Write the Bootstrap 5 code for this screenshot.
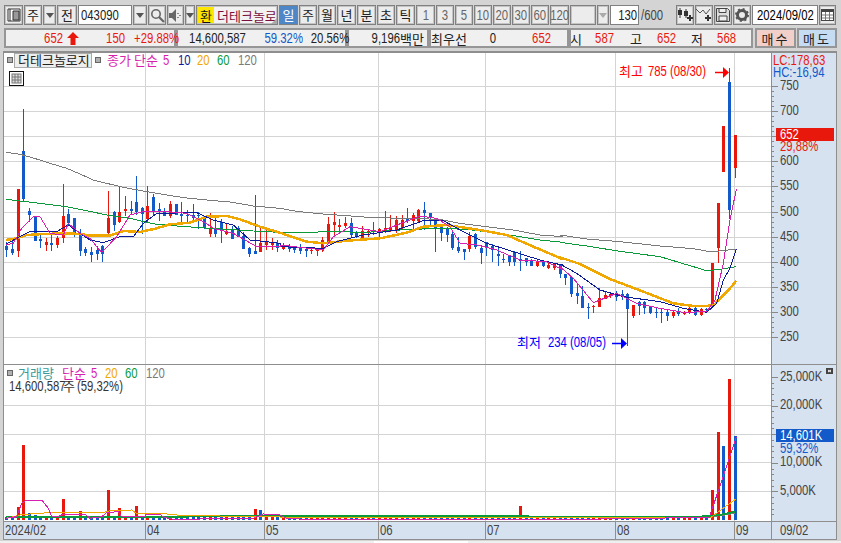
<!DOCTYPE html>
<html lang="ko">
<head>
    <meta charset="UTF-8">
    <meta name="viewport" content="width=device-width, initial-scale=1.0">
    <title>더테크놀로지 차트</title>
    <link href="https://cdn.jsdelivr.net/npm/bootstrap@5.3.2/dist/css/bootstrap.min.css" rel="stylesheet">
    <style>
        html, body { height: 543px; overflow: hidden; }
        body { margin: 0; background: #d4d4d4; color: #222; font: 14px "Liberation Sans", "Noto Sans CJK KR", sans-serif; line-height: 1; }
        svg { display: block; overflow: visible; }
        svg text { font-family: "Liberation Sans", sans-serif; font-size: 14px; }
        .ko, svg text.ko { font-family: "Noto Sans CJK KR", sans-serif; font-size: 13px; }
        /* 좁은 숫자: 원본 비트맵 글꼴 폭에 맞춤 */
        .nar { display: inline-block; transform: scaleX(.81); }
        .nar-l { display: inline-block; transform: scaleX(.81); transform-origin: left center; }
        /* 상단 툴바: 칸 폭은 grid 트랙으로 */
        .toolbar { margin: 5px 0 0 4px; width: 833px; height: 20px; column-gap: 1px;
            grid-template-columns: 19px 18px 13px 20px 54px 14px 18px 17px 10px 82px 19px 18px 18px 19px 19px 18px 19px 19px 18px 18px 18px 18px 18px 18px 19px 26px 12px 29px 35px 18px 18px 18px 18px 66px 17px; }
        .tb-btn { --bs-btn-padding-x: 0; --bs-btn-padding-y: 0; --bs-btn-border-radius: 0; --bs-btn-border-width: 0; height: 20px; background: #ececec; outline: 1px solid #808080; outline-offset: -1px; box-shadow: inset 0 0 0 2px #c4c4c4; color: #222; display: flex; align-items: center; justify-content: center; white-space: nowrap; }
        .tb-btn.ko { font-size: 13px; }
        .tb-flat { background: #f2f2f2; }
        .tb-on { background: #4f86c6; color: #fff; box-shadow: none; }
        .tb-num { color: #666; font-size: 14px; }
        .tb-white { background: #fff; justify-content: flex-start; padding-left: 3px; font-size: 14px; box-shadow: none; }
        .tb-date { padding-left: 5px; color: #000; }
        .tb-right { justify-content: flex-end; padding-right: 0; }
        .tb-name { background: #f2f2f2; justify-content: flex-start; color: #7a0f3c; position: relative; }
        .tb-name .hwan { background: #ffe600; color: #111; width: 16px; height: 16px; margin: 0 3px 0 2px; display: flex; align-items: center; justify-content: center; }
        .tb-name .corner { position: absolute; right: 1px; bottom: 1px; border-left: 6px solid transparent; border-bottom: 6px solid #aaa; }
        .tb-plain { color: #444; display: flex; align-items: center; padding-left: 1px; font-size: 14px; }
        .caret { border-left: 4px solid transparent; border-right: 4px solid transparent; border-top: 5px solid #555; }
        .caret-off { border-top-color: #aaa; }
        /* 시세 바 */
        .quote-bar { margin: 3px 0 0 4px; width: 833px; height: 20px; }
        .q-cell { height: 20px; background: #f0f0f0; outline: 2px solid #969696; outline-offset: -2px; display: grid; align-items: center; }
        .q-1 { width: 172px; grid-template-columns: 59px 15px 47px 48px; }
        .q-2 { width: 171px; grid-template-columns: 69px 58px 41px; }
        .q-3 { width: 82px; grid-template-columns: 53px 27px; }
        .q-4 { width: 140px; grid-template-columns: 2px 38px 27px 55px; }
        .q-5 { width: 184px; grid-template-columns: 1px 12px 32px 28px 34px 27px 33px; }
        .q-buy, .q-sell { height: 20px; width: 41px; outline: 2px solid #969696; outline-offset: -2px; display: flex; align-items: center; justify-content: center; letter-spacing: 2px; }
        .q-buy { background: #f2cfc8; margin-left: 2px; }
        .q-sell { background: #c6dcf2; margin-left: 1px; width: 40px; }
        .up { color: #e8190c; }
        .dn { color: #1259c9; }
        .cell-r { text-align: right; transform: scaleX(.81); transform-origin: right center; }
        .cell-r.ko { transform: none; }
        /* 차트 */
        .chart-frame { margin: 3px 0 0 3px; width: 834px; border-top: 2px solid #8e8e8e; border-left: 1px solid #8e8e8e; }
        .pane { background: #fff; position: relative; width: 767px; }
        .pane-top { height: 312px; border-bottom: 1px solid #8e8e8e; }
        .pane-bottom { height: 157px; border-bottom: 1px solid #8e8e8e; }
        .axis-col { width: 66px; background: #d6e2ef; }
        .date-axis { background: #d6e2ef; height: 18px; border-bottom: 1px solid #8e8e8e; }
        /* 맨 아래 잘린 입력 줄 */
        .bottom-strip { height: 3px; margin-top: 1px; background: #efefef; }
        .strip-gap { width: 374px; }
        .strip-field { width: 94px; background: #fff; }
    </style>
</head>
<body>
    <!-- 상단 툴바 -->
    <div class="d-grid toolbar">
        <button class="btn tb-btn"><svg width="14" height="14" viewBox="0 0 14 14"><path d="M1 1h12v12H1z" fill="#fff" stroke="#333"/><path d="M3 1v12M6 3h6v9H6z" fill="#999" stroke="#333"/></svg></button>
        <button class="btn tb-btn tb-flat ko">주</button>
        <button class="btn tb-btn"><span class="caret"></span></button>
        <button class="btn tb-btn ko">전</button>
        <div class="tb-btn tb-white"><span class="nar-l">043090</span></div>
        <button class="btn tb-btn"><span class="caret"></span></button>
        <button class="btn tb-btn"><svg width="15" height="15" viewBox="0 0 15 15"><circle cx="6" cy="6" r="4.2" fill="none" stroke="#666" stroke-width="1.6"/><path d="M9 9l5 5" stroke="#666" stroke-width="2.2"/></svg></button>
        <button class="btn tb-btn"><svg width="14" height="13" viewBox="0 0 14 13"><path d="M0 4h3l4-4v13l-4-4H0z" fill="#666"/><path d="M9 4v1M9 8v1M11 6v1" stroke="#666" stroke-width="1.5"/></svg></button>
        <button class="btn tb-btn"><span class="caret"></span></button>
        <div class="tb-btn tb-name ko"><span class="hwan">환</span>더테크놀로<span class="corner"></span></div>
        <button class="btn tb-btn tb-on ko">일</button>
        <button class="btn tb-btn ko">주</button>
        <button class="btn tb-btn ko">월</button>
        <button class="btn tb-btn ko">년</button>
        <button class="btn tb-btn ko">분</button>
        <button class="btn tb-btn ko">초</button>
        <button class="btn tb-btn ko">틱</button>
        <button class="btn tb-btn tb-num"><span class="nar">1</span></button>
        <button class="btn tb-btn tb-num"><span class="nar">3</span></button>
        <button class="btn tb-btn tb-num"><span class="nar">5</span></button>
        <button class="btn tb-btn tb-num"><span class="nar">10</span></button>
        <button class="btn tb-btn tb-num"><span class="nar">20</span></button>
        <button class="btn tb-btn tb-num"><span class="nar">30</span></button>
        <button class="btn tb-btn tb-num"><span class="nar">60</span></button>
        <button class="btn tb-btn tb-num"><span class="nar">120</span></button>
        <div class="tb-btn"></div>
        <button class="btn tb-btn"><span class="caret caret-off"></span></button>
        <div class="tb-btn tb-white tb-right"><span class="nar">130</span></div>
        <div class="tb-plain"><span class="nar-l">/600</span></div>
        <button class="btn tb-btn"><svg width="16" height="14" viewBox="0 0 16 14"><path d="M3 0v10M9 1v9" stroke="#333"/><rect x="1" y="2" width="4" height="5" fill="#333"/><rect x="7" y="3" width="4" height="5" fill="#333"/><path d="M13 7v6M10 10h6" stroke="#333" stroke-width="2"/></svg></button>
        <button class="btn tb-btn"><svg width="16" height="14" viewBox="0 0 16 14"><path d="M0 1l4 4 3-3 3 4 4-5" fill="none" stroke="#555"/><path d="M12 7v6M9 10h6" stroke="#333" stroke-width="2"/></svg></button>
        <button class="btn tb-btn"><svg width="14" height="14" viewBox="0 0 14 14"><path d="M.5.5h11l2 2v11H.5z" fill="#ddd" stroke="#444"/><path d="M3 .5h7v4H3zM3 8h8v5H3z" fill="#eee" stroke="#444"/></svg></button>
        <button class="btn tb-btn"><svg width="14" height="14" viewBox="0 0 14 14"><circle cx="7" cy="7" r="4.5" fill="none" stroke="#555" stroke-width="3"/><circle cx="7" cy="7" r="6" fill="none" stroke="#555" stroke-width="2" stroke-dasharray="2 2.7"/></svg></button>
        <div class="tb-btn tb-white tb-date"><span class="nar-l">2024/09/02</span></div>
        <button class="btn tb-btn"><svg width="13" height="12" viewBox="0 0 13 12"><rect x=".5" y=".5" width="12" height="11" fill="#fff" stroke="#444"/><path d="M.5 1h12v2H.5z" fill="#444"/><path d="M4.5 3v8M8.5 3v8M1 6h11M1 9h11" stroke="#777"/></svg></button>
    </div>

    <!-- 시세 -->
    <div class="d-flex quote-bar">
        <div class="q-cell q-1">
            <span class="cell-r up">652</span>
            <svg class="ms-1" width="12" height="13" viewBox="0 0 12 13"><path d="M6 0l6 6H8.5v7h-5V6H0z" fill="#e8190c"/></svg>
            <span class="cell-r up">150</span>
            <span class="cell-r up">+29.88%</span>
        </div>
        <div class="q-cell q-2">
            <span class="cell-r">14,600,587</span>
            <span class="cell-r dn">59.32%</span>
            <span class="cell-r">20.56%</span>
        </div>
        <div class="q-cell q-3">
            <span class="cell-r">9,196</span>
            <span class="ko">백만</span>
        </div>
        <div class="q-cell q-4">
            <span></span>
            <span class="ko">최우선</span>
            <span class="cell-r">0</span>
            <span class="cell-r up">652</span>
        </div>
        <div class="q-cell q-5">
            <span></span>
            <span class="ko">시</span>
            <span class="cell-r up">587</span>
            <span class="cell-r ko">고</span>
            <span class="cell-r up">652</span>
            <span class="cell-r ko">저</span>
            <span class="cell-r up">568</span>
        </div>
        <div class="q-buy ko">매수</div>
        <div class="q-sell ko">매도</div>
    </div>

    <!-- 차트 -->
    <div class="chart-frame">
        <div class="d-flex pane-top">
            <div class="pane"><svg id="price-plot" width="767" height="311" viewBox="4 53 767 311"></svg></div>
            <div class="axis-col"><svg id="price-axis" width="66" height="311" viewBox="771 53 66 311"></svg></div>
        </div>
        <div class="d-flex pane-bottom">
            <div class="pane"><svg id="vol-plot" width="767" height="156" viewBox="4 365 767 156"></svg></div>
            <div class="axis-col"><svg id="vol-axis" width="66" height="156" viewBox="771 365 66 156"></svg></div>
        </div>
        <div class="date-axis"><svg id="date-axis" width="833" height="17" viewBox="4 522 833 17"></svg></div>
    </div>
    <div class="d-flex bottom-strip">
        <div class="strip-gap"></div>
        <div class="strip-field"></div>
    </div>

    <script>
    // 색상
    const RED = '#e8190c', BLUE = '#1259c9', GRID = '#d4d4d4', AXIS_TXT = '#444', EDGE = '#8e8e8e';
    const MAG = '#d81fb0', NAVY = '#0a1a9a', ORG = '#f0a800', GRN = '#0a9a3a', GRY = '#7a7a7a', TEAL = '#3a9a9a';
    const GRID_X = [145, 264, 378, 485, 615, 734];

    // 봉 좌표: 3배 확대 화면에서 읽은 값 [고, 몸통위, 몸통아래, 저, 양봉]
    const groupA = [[425,438,450,470,0],[420,447,458,465,0],[267,267,453,470,1],[27,153,297,305,0],[325,333,345,365,0],[348,348,422,422,0],[405,417,423,445,0],[415,426,435,452,1],[405,429,435,452,0],[408,414,435,443,1],[252,348,414,428,1],[327,342,369,378,0],[354,354,402,410,0],[388,402,453,467,0],[441,447,459,467,0],[441,456,465,485,0],[438,450,462,480,0],[435,438,462,485,0],[273,354,399,405,1],[334,336,375,393,0],[258,336,366,369,1],[288,327,333,348,1],[303,327,333,345,0],[228,306,336,345,0],[321,324,342,402,0],[258,318,357,366,1],[282,291,333,345,0],[309,327,333,363,0],[324,336,348,348,0],[303,312,348,354,1],[312,312,345,345,0],[306,342,348,372,0],[330,345,348,372,0],[312,345,354,360,0],[336,345,347,387,0],[351,354,384,387,0],[339,387,402,411,1],[348,387,402,411,0],[357,366,393,429,0],[369,393,402,405,1],[378,390,417,417,0],[378,384,411,411,0],[396,408,447,447,0],[441,444,462,471,0],[285,453,462,462,0],[378,429,456,456,1],[390,426,435,450,1],[414,426,435,450,1],[420,429,444,456,0]];
    const groupB = [[190,195,207,210,1],[192,198,208,215,0],[197,199,209,218,0],[192,205,212,222,0],[205,208,212,230,0],[208,210,212,222,1],[208,210,212,228,1],[170,180,208,215,1],[110,132,185,190,1],[96,126,135,165,1],[118,136,141,155,1],[110,129,138,145,1],[114,129,165,170,0],[153,155,168,175,0],[138,152,180,180,1],[147,152,160,170,1],[126,153,157,165,0],[145,148,156,178,1],[93,144,156,158,1],[105,141,153,156,1],[108,120,153,160,1],[105,120,144,146,1],[84,118,122,130,0],[100,105,123,150,1],[87,90,122,125,1],[66,90,99,150,0],[99,99,114,135,0],[117,120,144,216,0],[132,141,159,183,0],[141,147,165,186,0],[150,162,204,210,0],[171,201,213,219,0],[207,207,216,240,0],[156,168,207,216,1],[159,162,201,207,0],[195,204,219,252,0],[186,186,201,228,0],[192,198,210,246,0],[204,222,228,258,0],[222,237,240,249,0],[228,228,246,258,0],[213,216,246,258,0],[213,237,243,273,0],[234,234,246,258,0],[237,240,258,258,0],[240,246,258,261,1],[240,246,258,261,0],[249,255,264,267,1],[249,252,264,270,1],[252,252,282,294,0],[282,282,294,315,0]];
    const groupC = [[648,650,702,712,0],[672,700,708,733,0],[678,708,744,745,0],[730,742,745,776,0],[735,738,742,758,1],[685,714,740,740,1],[692,706,716,718,1],[695,703,708,715,1],[693,706,710,722,0],[690,702,710,720,0],[700,703,746,857,0],[735,735,768,773,1],[722,725,738,765,0],[722,725,745,762,0],[740,740,758,762,0],[745,755,758,775,0],[745,755,760,788,0],[748,755,768,782,0],[750,756,768,774,1],[745,755,762,768,0],[752,755,763,765,1],[740,743,758,762,1],[735,745,765,768,0],[743,748,765,768,1],[745,746,750,752,0],[608,610,735,740,1],[430,430,563,610,1],[198,198,335,335,1],[25,66,450,478,0],[225,225,325,353,1]];
    const toPx = (rows, oy) => rows.map(r => ({ hi: oy + r[0] / 3, top: oy + r[1] / 3, bot: oy + r[2] / 3, lo: oy + r[3] / 3, up: !!r[4] }));
    const candles = [...toPx(groupA, 100), ...toPx(groupB, 180), ...toPx(groupC, 60)];
    const xOf = i => Math.round(6.3 + i * 5.646);

    // 이동평균선: 확대 화면 좌표를 세 구간으로 나눠서
    const seg = (pts, ox, oy) => pts.map(p => [ox + p[0] / 3, oy + p[1] / 3]);
    const line = (a, b, c) => [...seg(a, 0, 100), ...seg(b, 280, 180), ...seg(c, 560, 60)];
    const priceLines = [
        { color: GRY, w: 1, pts: line([[18,157],[60,163],[100,174],[150,190],[200,205],[240,222],[280,240],[320,250],[370,262],[440,275],[500,285],[560,294],[620,300],[690,306],[760,318],[840,325]], [[50,94],[130,102],[280,113],[380,115],[480,118],[540,130],[620,140],[700,150],[780,165],[850,170]], [[0,525],[80,537],[180,545],[300,558],[400,566],[450,575],[490,572],[529,567]]) },
        { color: GRN, w: 1, pts: line([[18,298],[60,303],[120,310],[200,320],[260,332],[320,345],[390,355],[430,365],[470,373],[530,378],[600,383],[680,388],[760,393],[840,397]], [[70,157],[160,155],[260,157],[360,150],[470,145],[560,148],[640,158],[720,170],[780,180],[850,187]], [[0,547],[80,558],[180,574],[300,590],[400,620],[440,632],[480,628],[529,620]]) },
        { color: ORG, w: 2.5, pts: line([[18,420],[50,415],[80,405],[130,402],[200,400],[240,402],[270,407],[330,407],[370,393],[420,396],[470,385],[510,373],[570,368],[620,350],[680,348],[720,358],[780,380],[840,398]], [[80,185],[130,190],[200,182],[300,175],[380,158],[430,140],[500,135],[600,150],[680,165],[760,200],[850,238]], [[0,592],[60,612],[150,657],[250,695],[340,730],[400,738],[460,737],[480,715],[510,685],[529,662]]) },
        { color: NAVY, w: 1, pts: line([[18,432],[60,410],[90,395],[170,395],[205,375],[240,400],[270,420],[310,428],[360,410],[400,410],[430,370],[470,340],[590,338],[640,360],[700,375],[750,420],[800,425],[840,430]], [[0,200],[130,205],[170,185],[250,165],[350,150],[430,122],[490,122],[550,155],[620,190],[700,215],[780,240],[850,256]], [[0,612],[50,640],[120,690],[190,710],[300,725],[370,745],[440,757],[470,730],[490,660],[510,625],[529,568]]) },
        { color: MAG, w: 1, pts: line([[18,435],[40,430],[65,385],[100,350],[120,350],[150,400],[190,405],[205,370],[240,400],[270,415],[305,458],[350,410],[390,345],[430,335],[500,335],[560,340],[610,365],[640,385],[700,400],[770,440],[840,440]], [[0,195],[130,210],[160,170],[210,140],[300,155],[420,108],[470,115],[510,140],[540,190],[590,195],[650,210],[720,240],[800,245],[850,270]], [[0,620],[40,655],[100,728],[170,700],[230,730],[300,745],[370,757],[440,755],[465,720],[490,610],[510,480],[529,388]]) }
    ];
    const poly = (pts, color, w) => `<polyline points="${pts.map(p => p.join(',')).join(' ')}" fill="none" stroke="${color}" stroke-width="${w}" shape-rendering="crispEdges"/>`;
    const hLine = (x1, x2, y, c) => `<path d="M${x1} ${y + .5}H${x2}" stroke="${c}"/>`;
    const vLine = (x, y1, y2, c) => `<path d="M${x + .5} ${y1}V${y2}" stroke="${c}"/>`;
    // 숫자는 좁게, 한글은 그대로
    const num = (x, y, s, c) => `<text transform="translate(${x} ${y}) scale(.81 1)" fill="${c}">${s}</text>`;
    const han = (x, y, s, c) => `<text class="ko" x="${x}" y="${y}" fill="${c}">${s}</text>`;
    const square = (x, y) => `<rect x="${x + .5}" y="${y + .5}" width="5" height="5" fill="#b0b0b0" stroke="#666"/>`;

    // 가격 차트
    const priceY = p => Math.round(86 + (750 - p) * 0.502);
    let price = '';
    for (let p = 250; p <= 750; p += 50) price += hLine(4, 771, priceY(p), GRID);
    GRID_X.forEach(x => price += vLine(x, 53, 364, GRID));
    candles.forEach((c, i) => {
        const color = c.up ? RED : BLUE, x = xOf(i);
        price += `<rect x="${x}" y="${c.hi}" width="1" height="${c.lo - c.hi}" fill="${color}" shape-rendering="crispEdges"/>`;
        price += `<rect x="${x - 1}" y="${c.top}" width="3" height="${Math.max(c.bot - c.top, 1)}" fill="${color}" shape-rendering="crispEdges"/>`;
    });
    priceLines.forEach(l => price += poly(l.pts, l.color, l.w));
    // 범례
    price += square(7, 57) + `<rect x="14.5" y="53.5" width="77" height="14" fill="#eee" stroke="#aaa"/>` + han(18, 65, '더테크놀로지', '#222') + square(95, 57);
    price += han(107, 65, '종가', MAG) + han(134, 65, '단순', MAG) + num(163, 65, '5', MAG) + num(178, 65, '10', NAVY) + num(197, 65, '20', ORG) + num(217, 65, '60', GRN) + num(238, 65, '120', GRY);
    price += `<rect x="9.5" y="71.5" width="14" height="14" fill="#fff" stroke="#111"/><rect x="12" y="74" width="9" height="9" fill="#ddd" stroke="#777"/><path d="M15 74v9M18 74v9M12 77h9M12 80h9" stroke="#777"/>`;
    // 최고, 최저
    price += han(619, 76, '최고', '#f00') + num(648, 76, '785 (08/30)', '#f00');
    price += `<path d="M715 72.5h9" stroke="#f00" stroke-width="1.5"/><path d="M723 67l6 5.5-6 5.5z" fill="#f00"/>`;
    price += han(517, 347, '최저', '#00f') + num(548, 347, '234 (08/05)', '#00f');
    price += `<path d="M612 343.5h9" stroke="#00f" stroke-width="1.5"/><path d="M621 338l6 5.5-6 5.5z" fill="#00f"/>`;
    document.getElementById('price-plot').innerHTML = price;

    // 가격 축
    let pAxis = vLine(771, 53, 364, EDGE) + vLine(836, 53, 364, EDGE);
    pAxis += num(773, 65, 'LC:178,63', RED) + num(773, 77, 'HC:-16,94', BLUE);
    for (let p = 250; p <= 750; p += 10) {
        const y = priceY(p), major = p % 50 === 0;
        pAxis += `<path d="M771 ${y + .5}h${major ? 7 : 3}" stroke="#888"/>`;
        if (major && p !== 650) pAxis += num(780, y + 4, p, AXIS_TXT);
    }
    pAxis += `<rect x="776" y="128" width="58" height="13" fill="${RED}"/>` + num(780, 139, '652', '#fff') + num(780, 151, '29,88%', RED);
    document.getElementById('price-axis').innerHTML = pAxis;

    // 거래량: 큰 봉만 직접 지정 { 인덱스: [확대 y, 양봉] }, 나머지는 바닥 봉
    const BASE = 519;
    const volTall = { 2: [441, 1], 3: [255, 1], 4: [460, 0], 5: [465, 0], 10: [417, 1], 13: [453, 1], 18: [390, 1], 20: [444, 1], 23: [438, 1], 44: [447, 1], 45: [450, 0], 91: [438, 1], 125: [390, 1], 126: [216, 1], 127: [258, 0], 128: [57, 1], 129: [228, 0] };
    let vol = '';
    [405, 434, 462, 491].forEach(y => vol += hLine(4, 771, y, GRID));
    GRID_X.forEach(x => vol += vLine(x, 365, 521, GRID));
    candles.forEach((c, i) => {
        const t = volTall[i];
        const top = t ? 360 + t[0] / 3 : BASE - 2;
        const color = t ? (t[1] ? RED : BLUE) : (c.up ? RED : BLUE);
        vol += `<rect x="${xOf(i) - 1}" y="${top}" width="3" height="${BASE - top + 1}" fill="${color}" shape-rendering="crispEdges"/>`;
    });
    const vSeg = (a, b) => [...seg(a, 0, 360), ...seg(b, 600, 360)];
    vol += poly(vSeg([[18,470],[900,467]], [[0,470],[300,470],[330,472],[405,460]]), GRY, 1);
    vol += poly(vSeg([[18,472],[900,468]], [[0,470],[300,470],[360,465],[405,455]]), GRN, 2);
    vol += poly(vSeg([[18,475],[60,465],[110,460],[175,457],[310,457],[330,452],[395,450],[410,460],[500,462],[540,466],[900,472]], [[0,473],[330,474],[409,416]]), ORG, 1);
    vol += poly(vSeg([[18,475],[50,470],[65,430],[80,420],[125,420],[145,445],[155,470],[175,470],[190,462],[255,462],[270,475],[305,470],[320,458],[355,455],[365,470],[435,470],[435,463],[480,463],[490,472],[520,478],[760,475],[790,462],[835,463],[860,475],[900,477]], [[0,477],[328,472],[409,232]]), MAG, 1);
    vol += square(7, 370) + han(18, 378, '거래량', TEAL) + han(62, 378, '단순', MAG) + num(91, 378, '5', MAG) + num(105, 378, '20', ORG) + num(125, 378, '60', GRN) + num(146, 378, '120', GRY);
    vol += num(9, 391, '14,600,587', '#333') + han(63, 391, '주', '#333') + num(77, 391, '(59,32%)', '#333');
    document.getElementById('vol-plot').innerHTML = vol;

    // 거래량 축
    const volLabels = [[25000, 377], [20000, 405], [10000, 462], [5000, 491]];
    let vAxis = vLine(771, 365, 521, EDGE) + vLine(836, 365, 521, EDGE);
    for (let y = 377, n = 0; y < 520; y += 5.72, n++) vAxis += `<path d="M771 ${Math.round(y) + .5}h${n % 5 === 0 ? 7 : 3}" stroke="#888"/>`;
    volLabels.forEach(v => vAxis += num(780, v[1] + 4, v[0].toLocaleString('en-US') + 'K', AXIS_TXT));
    vAxis += `<rect x="776" y="429" width="58" height="13" fill="${BLUE}"/>` + num(780, 440, '14,601K', '#fff') + num(780, 453, '59,32%', BLUE);
    vAxis += `<rect x="826" y="368" width="7" height="6" fill="#444"/><path d="M828 370l3 2M831 370l-3 2" stroke="#fff"/>`;
    document.getElementById('vol-axis').innerHTML = vAxis;

    // 날짜 축
    const dates = [[5, '2024/02'], [147, '04'], [266, '05'], [380, '06'], [487, '07'], [617, '08'], [736, '09'], [780, '09/02']];
    let dAxis = vLine(836, 522, 539, EDGE);
    [145, 264, 378, 485, 615, 734, 771].forEach(x => dAxis += vLine(x, 522, 539, EDGE));
    dates.forEach(d => dAxis += num(d[0], 535, d[1], AXIS_TXT));
    document.getElementById('date-axis').innerHTML = dAxis;
    </script>
    <script src="https://cdn.jsdelivr.net/npm/bootstrap@5.3.2/dist/js/bootstrap.bundle.min.js"></script>
</body>
</html>
